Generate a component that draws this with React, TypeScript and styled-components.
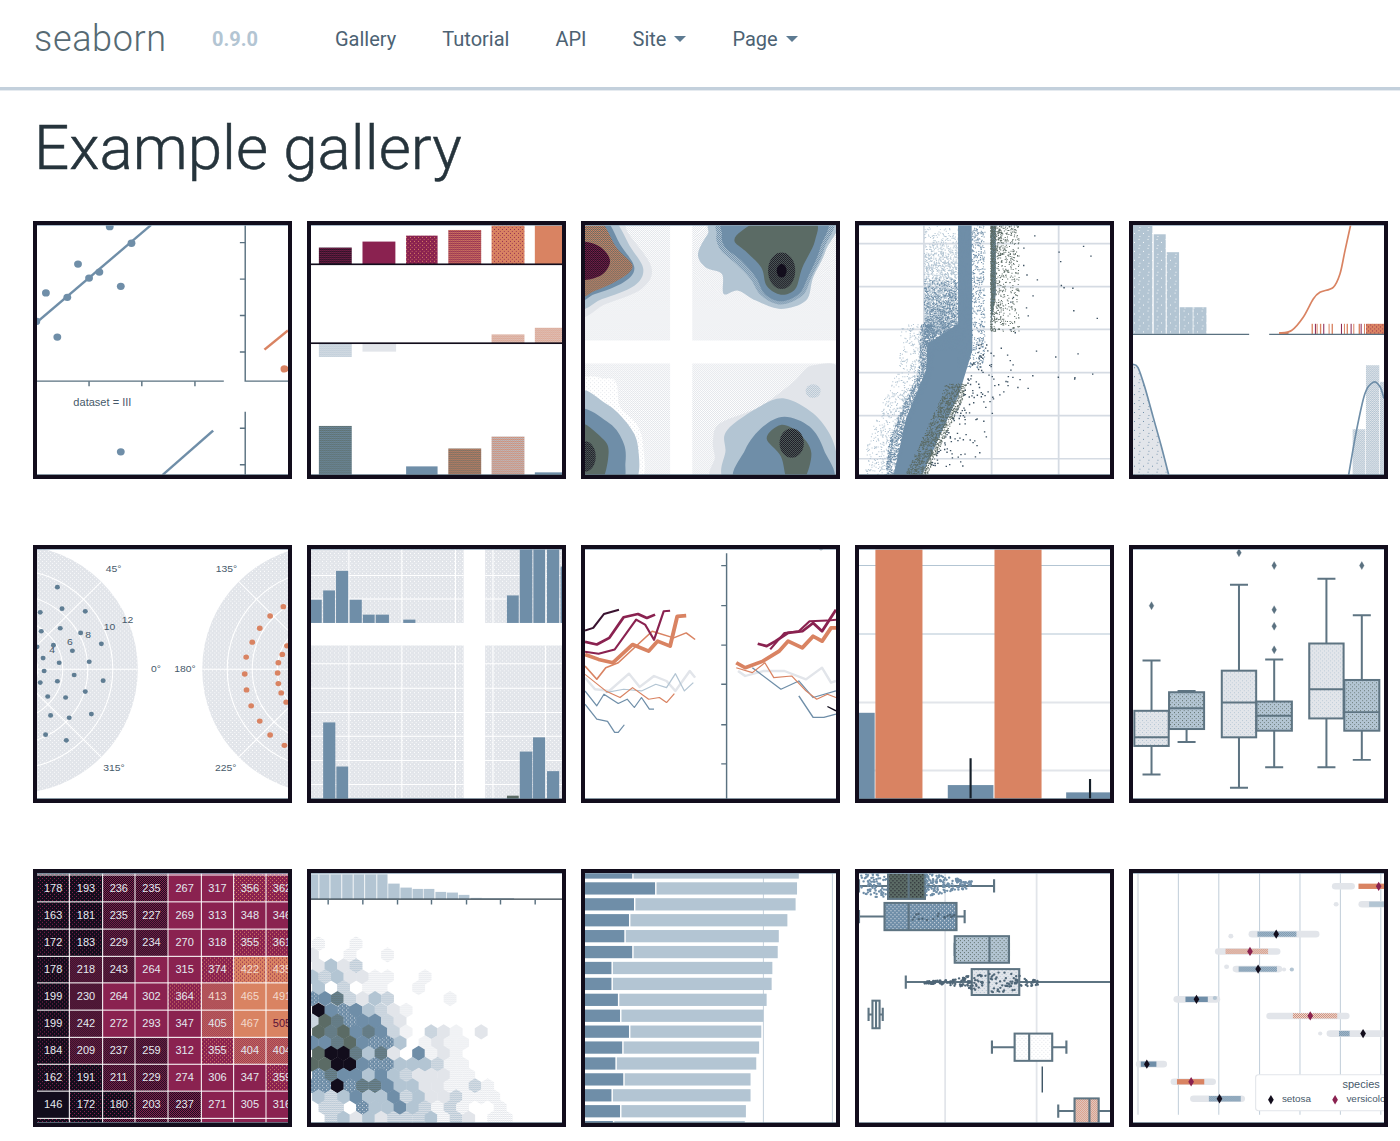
import React from "react";
import styled, { createGlobalStyle } from "styled-components";

const DARK = "#120d1c";
const MAROON = "#8a2250";
const ORANGE = "#d98362";
const STEEL = "#6f8ea8";
const LIGHT = "#b3c5d3";
const PALE = "#e2e5ea";
const GREEN = "#5b6b65";
const AXIS = "#5a7180";

const Global = createGlobalStyle`
  html, body { margin: 0; padding: 0; background: #fff; }
  body { font-family: Roboto, "Liberation Sans", sans-serif; overflow-x: hidden; }
`;

const Navbar = styled.nav`
  display: flex;
  align-items: center;
  height: 90px;
  padding: 0 34px 9px;
  box-sizing: border-box;
  border-bottom: 3px solid #c3d0dc;
  box-shadow: 0 1px 0 #e6ebf0;
`;
const Brand = styled.a`
  font-size: 36px;
  font-weight: 300;
  color: #566a73;
  letter-spacing: 0.65px;
  width: 178px;
`;
const Version = styled.span`
  font-size: 20px;
  font-weight: 700;
  color: #b3c5d3;
  width: 123px;
`;
const NavList = styled.div`
  display: flex;
  gap: 46px;
`;
const NavLink = styled.a`
  display: inline-flex;
  align-items: center;
  gap: 8px;
  font-size: 20px;
  font-weight: 400;
  color: #4c6273;
`;
const Caret = styled.span`
  width: 0;
  height: 0;
  border-left: 6px solid transparent;
  border-right: 6px solid transparent;
  border-top: 6px solid #5d7b92;
`;
const Main = styled.main`
  padding: 0 0 0 33px;
`;
const Title = styled.h1`
  margin: 0;
  padding: 22px 0 38px 1px;
  font-size: 62px;
  line-height: 71px;
  font-weight: 300;
  color: #26343c;
  -webkit-text-stroke: 0.5px #26343c;
`;
const Gallery = styled.div`
  display: grid;
  grid-template-columns: repeat(5, 259px);
  column-gap: 15px;
  row-gap: 66px;
`;
const Thumb = styled.a`
  display: block;
  width: 259px;
  height: 258px;
  box-sizing: border-box;
  border: 4px solid ${DARK};
  background: #fff;
  overflow: hidden;
`;
const ChartSvg = styled.svg`
  display: block;
  width: 251px;
  height: 250px;
`;
const HiddenDefs = styled.svg`
  position: absolute;
  width: 0;
  height: 0;
`;
const Label = styled.text<{ $size?: number; $color?: string }>`
  font-family: "Liberation Sans", Arial, sans-serif;
  font-size: ${(p) => p.$size ?? 29}px;
  fill: ${(p) => p.$color ?? "#46596a"};
`;

/* ---------- helpers ---------- */
const rng = (seed: number) => () => {
  seed |= 0;
  seed = (seed + 0x6d2b79f5) | 0;
  let t = Math.imul(seed ^ (seed >>> 15), 1 | seed);
  t = (t + Math.imul(t ^ (t >>> 7), 61 | t)) ^ t;
  return ((t ^ (t >>> 14)) >>> 0) / 4294967296;
};
type Pt = [number, number];
const smooth = (pts: Pt[], closed = true) => {
  const n = pts.length;
  const g = (i: number) => (closed ? pts[(i + n) % n] : pts[Math.max(0, Math.min(n - 1, i))]);
  let d = `M${pts[0][0]},${pts[0][1]}`;
  const end = closed ? n : n - 1;
  for (let i = 0; i < end; i++) {
    const [p0, p1, p2, p3] = [g(i - 1), g(i), g(i + 1), g(i + 2)];
    d += `C${p1[0] + (p2[0] - p0[0]) / 6},${p1[1] + (p2[1] - p0[1]) / 6} ${p2[0] - (p3[0] - p1[0]) / 6},${p2[1] - (p3[1] - p1[1]) / 6} ${p2[0]},${p2[1]}`;
  }
  return d + (closed ? "Z" : "");
};
const poly = (pts: Pt[]) => pts.map((p) => p.join(",")).join(" ");
const interp = (tbl: Pt[], v: number) => {
  for (let i = 1; i < tbl.length; i++) {
    if (v <= tbl[i][0]) {
      const [a, b] = [tbl[i - 1], tbl[i]];
      return a[1] + ((b[1] - a[1]) * (v - a[0])) / (b[0] - a[0]);
    }
  }
  return tbl[tbl.length - 1][1];
};

/* pattern ids: name for 2.8x3 charts, name + "S" for 3x3 charts */
const P = (n: string) => `url(#${n})`;
const PS = (n: string) => `url(#${n}S)`;

const Checker = ({ id, a, b, k }: { id: string; a: string; b: string; k: number }) => (
  <pattern id={id} patternUnits="userSpaceOnUse" width={k * 2} height={6} shapeRendering="crispEdges">
    <rect width={k * 2} height={6} fill={a} />
    <rect width={k} height={3} fill={b} />
    <rect x={k} y={3} width={k} height={3} fill={b} />
  </pattern>
);
const Dots = ({ id, a, b, k }: { id: string; a: string; b: string; k: number }) => (
  <pattern id={id} patternUnits="userSpaceOnUse" width={k * 4} height={12} shapeRendering="crispEdges">
    <rect width={k * 4} height={12} fill={a} />
    <rect width={k} height={3} fill={b} />
    <rect x={k * 2} y={6} width={k} height={3} fill={b} />
  </pattern>
);
const Sparse = ({ id, a, b, k }: { id: string; a: string; b: string; k: number }) => (
  <pattern id={id} patternUnits="userSpaceOnUse" width={k * 9} height={27} shapeRendering="crispEdges">
    <rect width={k * 9} height={27} fill={a} />
    <rect x={k} y={3} width={k} height={3} fill={b} />
    <rect x={k * 5} y={12} width={k} height={3} fill={b} />
    <rect x={k * 2} y={21} width={k} height={3} fill={b} />
  </pattern>
);
const CHECKS: [string, string, string][] = [
  ["pz", "#fff", PALE],
  ["dm", DARK, MAROON],
  ["mc", MAROON, ORANGE],
  ["gs", GREEN, STEEL],
  ["go", GREEN, ORANGE],
  ["lo", LIGHT, ORANGE],
  ["lp", LIGHT, PALE],
  ["ss", STEEL, LIGHT],
  ["op", ORANGE, PALE],
  ["bg", DARK, GREEN],
  ["lw", PALE, "#fff"],
  ["pl", "#fff", LIGHT],
];
const DOTS: [string, string, string][] = [
  ["pw", PALE, "#fff"],
  ["dd", DARK, MAROON],
  ["mo", MAROON, ORANGE],
  ["om", ORANGE, MAROON],
  ["gb", GREEN, DARK],
  ["lg", LIGHT, GREEN],
  ["sl", STEEL, PALE],
  ["gor", GREEN, ORANGE],
  ["ll", LIGHT, "#fff"],
  ["wp", "#fff", PALE],
  ["dw", DARK, "#fff"],
  ["pd", PALE, LIGHT],
];
const SPARSE: [string, string, string][] = [
  ["ls", LIGHT, "#fff"],
  ["ps", PALE, STEEL],
  ["ws", "#fff", LIGHT],
];
const PatternDefs = () => (
  <HiddenDefs aria-hidden="true">
    <defs>
      {[2.8, 3].map((k) => (
        <React.Fragment key={k}>
          {CHECKS.map(([id, a, b]) => (
            <Checker key={id} id={id + (k === 3 ? "S" : "")} a={a} b={b} k={k} />
          ))}
          {DOTS.map(([id, a, b]) => (
            <Dots key={id} id={id + (k === 3 ? "S" : "")} a={a} b={b} k={k} />
          ))}
          {SPARSE.map(([id, a, b]) => (
            <Sparse key={id} id={id + (k === 3 ? "S" : "")} a={a} b={b} k={k} />
          ))}
        </React.Fragment>
      ))}
    </defs>
  </HiddenDefs>
);

const Chart = ({ box, children }: { box: [number, number, number, number]; children: React.ReactNode }) => {
  const [x0, y0, x1, y1] = box;
  return (
    <Thumb>
      <ChartSvg viewBox={`${x0} ${y0} ${x1 - x0} ${y1 - y0}`} preserveAspectRatio="none">
        {children}
        <line x1={x0} x2={x1} y1={y0 + 1} y2={y0 + 1} stroke="#8fa6b8" strokeWidth={3} />
        <line x1={x0} x2={x1} y1={y1 - 1} y2={y1 - 1} stroke="#5f7483" strokeWidth={3} />
      </ChartSvg>
    </Thumb>
  );
};
type BarSpec = [number, number, number, number, string];
const Bars = ({ data }: { data: BarSpec[] }) => (
  <>
    {data.map(([a, b, t, base, f], i) => (
      <rect key={i} x={a} width={b - a} y={t} height={base - t} fill={f} />
    ))}
  </>
);
const Speckle = ({ pts, color, size = 3 }: { pts: Pt[]; color: string; size?: number }) => (
  <path d={pts.map(([x, y]) => `M${x.toFixed(1)} ${y.toFixed(1)}h${size}v${size}h-${size}z`).join("")} fill={color} />
);

/* ---------- 1: anscombe ---------- */
const Anscombe = () => {
  const dots: Pt[] = [[252, 47], [313, 97], [163, 160], [223, 184], [194, 202], [73, 247], [133, 260], [283, 227], [105, 380], [46, 333], [283, 726]];
  return (
    <Chart box={[48, 42, 752, 796]}>
      <line x1={48} y1={335} x2={368} y2={42} stroke={STEEL} strokeWidth={7} />
      <line x1={400} y1={796} x2={542} y2={662} stroke={STEEL} strokeWidth={7} />
      <line x1={686} y1={418} x2={752} y2={360} stroke={ORANGE} strokeWidth={7} />
      {dots.map(([x, y], i) => <circle key={i} cx={x} cy={y} r={11} fill={STEEL} />)}
      <circle cx={742} cy={476} r={11} fill={ORANGE} />
      <path d="M48 513H572M632 42V513H752M632 605V796" stroke={AXIS} strokeWidth={4} fill="none" />
      <path d="M194 513V528M342 513V528M491 513V528M632 95H617M632 205H617M632 315H617M632 425H617M632 655H617M632 765H617" stroke={AXIS} strokeWidth={4} fill="none" />
      <Label x={150} y={587} $size={31}>dataset = III</Label>
    </Chart>
  );
};

/* ---------- 2: grouped bars ---------- */
const FacetBars = () => (
  <Chart box={[816, 42, 1518, 796]}>
    <Bars data={[
      [838, 930, 110, 160, P("dm")], [960, 1052, 92, 160, MAROON], [1082, 1170, 74, 160, P("mo")],
      [1200, 1292, 57, 160, P("mc")], [1321, 1413, 42, 160, P("om")], [1442, 1518, 42, 160, ORANGE],
      [1321, 1413, 372, 398, P("op")], [1442, 1518, 352, 398, P("op")],
      [838, 930, 400, 440, P("lp")], [960, 1054, 400, 424, PALE],
      [838, 930, 648, 796, P("gs")], [1082, 1170, 770, 796, STEEL], [1200, 1292, 716, 796, P("go")],
      [1321, 1413, 680, 796, P("lo")], [1442, 1518, 788, 796, STEEL],
    ]} />
    <rect x={816} y={158} width={702} height={5} fill={DARK} />
    <rect x={816} y={396} width={702} height={5} fill={DARK} />
  </Chart>
);

/* ---------- 3: kde grid ---------- */
const Kde = () => {
  const layers: [string, Pt[]][] = [
    [PALE, [[20, 20], [135, 20], [165, 70], [228, 170], [200, 235], [100, 280], [20, 305]]],
    [LIGHT, [[20, 20], [115, 20], [170, 110], [205, 175], [180, 225], [90, 265], [20, 280]]],
    [STEEL, [[20, 20], [95, 20], [140, 100], [180, 170], [150, 215], [70, 250], [20, 255]]],
    [P("go"), [[20, 20], [80, 20], [130, 110], [175, 165], [140, 205], [70, 240], [20, 245]]],
    [P("dm"), [[20, 100], [80, 105], [112, 150], [85, 195], [20, 200]]],
    [P("lw"), [[345, 100], [380, 45], [440, 20], [770, 20], [745, 130], [700, 200], [680, 240], [695, 320], [670, 345], [580, 310], [500, 270], [440, 260], [400, 230], [350, 190]]],
    [LIGHT, [[358, 130], [385, 70], [420, 30], [730, 20], [715, 120], [680, 200], [660, 270], [590, 295], [520, 270], [470, 240], [430, 250], [425, 190], [380, 170]]],
    [P("ss"), [[410, 70], [440, 30], [720, 20], [712, 110], [675, 200], [650, 255], [590, 282], [535, 255], [505, 205], [465, 160], [420, 115]]],
    [STEEL, [[425, 70], [450, 30], [705, 20], [700, 110], [665, 200], [640, 250], [590, 272], [545, 250], [520, 200], [480, 150], [435, 110]]],
    [GREEN, [[460, 90], [480, 60], [540, 30], [680, 30], [685, 90], [650, 170], [630, 235], [590, 252], [550, 225], [535, 170], [490, 120]]],
    [P("wp"), [[20, 530], [100, 505], [130, 520], [140, 590], [185, 640], [205, 710], [190, 820], [20, 820]]],
    [LIGHT, [[20, 555], [100, 580], [160, 640], [190, 710], [175, 820], [20, 820]]],
    [STEEL, [[20, 605], [110, 640], [150, 700], [155, 760], [140, 820], [20, 820]]],
    [GREEN, [[20, 645], [90, 685], [108, 730], [85, 820], [20, 820]]],
    [PALE, [[400, 690], [420, 640], [530, 590], [620, 520], [680, 465], [770, 500], [770, 820], [420, 820], [405, 740]]],
    [LIGHT, [[440, 660], [530, 590], [600, 565], [680, 610], [730, 680], [750, 760], [750, 820], [450, 820], [435, 720]]],
    [STEEL, [[490, 720], [540, 650], [600, 620], [670, 650], [710, 720], [725, 820], [470, 820]]],
    [GREEN, [[550, 685], [590, 645], [640, 670], [675, 730], [650, 820], [610, 820], [590, 740]]],
  ];
  return (
    <Chart box={[42, 42, 744, 796]}>
      <path d="M42 42H280V390H42ZM342 42H744V390H342ZM42 460H280V796H42ZM342 460H744V796H342Z" fill={P("pz")} />
      {layers.map(([f, pts], i) => <path key={i} d={smooth(pts)} fill={f} />)}
      <ellipse cx={592} cy={180} rx={38} ry={55} fill={P("bg")} />
      <ellipse cx={592} cy={180} rx={14} ry={20} fill={DARK} />
      <circle cx={680} cy={543} r={21} fill={P("lp")} />
      <ellipse cx={620} cy={700} rx={34} ry={44} fill={P("bg")} />
      <ellipse cx={42} cy={740} rx={30} ry={46} fill={P("bg")} />
    </Chart>
  );
};

/* ---------- 4: scatter ---------- */
const LEFT_EDGE: Pt[] = [[340, 990], [480, 985], [610, 930], [700, 900], [796, 890]];
const RIGHT_EDGE: Pt[] = [[340, 1130], [420, 1130], [560, 1092], [680, 1040], [796, 990]];
const scatterData = (() => {
  const r = rng(11);
  const light: Pt[] = [];
  const steel: Pt[] = [];
  const green: Pt[] = [];
  const ink: Pt[] = [];
  for (let i = 0; i < 2200; i++) {
    const y = 42 + Math.pow(r(), 0.55) * 330;
    light.push([990 + r() * 92, y]);
  }
  for (let i = 0; i < 900; i++) {
    const y = 340 + r() * 456;
    light.push([interp(LEFT_EDGE, y) - Math.pow(r(), 2.2) * 70, y]);
  }
  for (let i = 0; i < 1400; i++) {
    const y = 340 + r() * 456;
    steel.push([interp(LEFT_EDGE, y) - 10 + r() * 40, y]);
  }
  for (let i = 0; i < 1300; i++) {
    const y = 42 + r() * 430;
    steel.push([1085 + Math.pow(r(), 1.5) * 75, y]);
  }
  for (let i = 0; i < 1500; i++) {
    const y = 200 + Math.pow(r(), 0.6) * 220;
    steel.push([990 + r() * 95, y]);
  }
  for (let i = 0; i < 900; i++) {
    const y = 42 + Math.pow(r(), 1.4) * 320;
    green.push([1176 + Math.pow(r(), 2) * 80, y]);
  }
  for (let i = 0; i < 1100; i++) {
    const y = 520 + r() * 276;
    green.push([interp(RIGHT_EDGE, y) - 62 * r() + 8, y]);
  }
  for (let i = 0; i < 150; i++) {
    const y = 400 + r() * 370;
    ink.push([interp(RIGHT_EDGE, y) + 5 + Math.pow(r(), 2) * 130, y]);
  }
  for (let i = 0; i < 32; i++) ink.push([1230 + r() * 260, 70 + r() * 500]);
  return { light, steel, green, ink };
})();
const Scatter = () => (
  <Chart box={[808, 42, 1512, 796]}>
    <path d="M808 98H1512M808 228H1512M808 357H1512M808 487H1512M808 617H1512M808 747H1512M990 42V796M1180 42V796M1368 42V796" stroke="#d5dbe3" strokeWidth={5} fill="none" />
    <Speckle pts={scatterData.light} color={LIGHT} />
    <polygon points={poly([[1086, 42], [1124, 42], [1126, 420], [1088, 555], [1036, 675], [985, 796], [905, 796], [940, 625], [996, 480], [1000, 400], [1086, 340]])} fill={STEEL} />
    <Speckle pts={scatterData.steel} color={STEEL} />
    <polygon points={poly([[1178, 42], [1192, 42], [1192, 250], [1178, 340]])} fill={P("gs")} />
    <Speckle pts={scatterData.green} color={GREEN} />
    <Speckle pts={scatterData.ink} color="#3d5263" size={4} />
  </Chart>
);

/* ---------- 5: pair grid ---------- */
const PairGrid = () => {
  const rug = [575, 585, 590, 600, 610, 626, 635, 663, 672, 680, 692, 700, 716, 722, 732];
  return (
    <Chart box={[40, 42, 792, 796]}>
      <Bars data={[
        [40, 98, 45, 370, PS("ls")], [102, 138, 70, 370, PS("ls")], [141, 178, 124, 370, PS("ls")],
        [180, 219, 290, 370, PS("ls")], [221, 260, 290, 370, PS("ls")],
        [698, 736, 658, 796, PS("lp")], [738, 778, 465, 796, PS("lp")], [780, 792, 515, 796, PS("lp")],
      ]} />
      {rug.map((x, i) => <rect key={x} x={x} y={340} width={i % 3 === 0 ? 4 : 3} height={32} fill={i % 3 === 1 ? MAROON : ORANGE} />)}
      <rect x={738} y={340} width={54} height={32} fill={PS("om")} />
      <rect x={478} y={365} width={28} height={6} fill={ORANGE} />
      <path d="M40 372H388M448 372H792" stroke={AXIS} strokeWidth={4} />
      <path d={smooth([[478, 368], [515, 360], [550, 320], [580, 265], [600, 245], [640, 230], [660, 190], [675, 120], [692, 42]], false)} stroke={ORANGE} strokeWidth={5} fill="none" />
      <path d={smooth([[40, 462], [55, 472], [75, 530], [100, 620], [125, 710], [147, 796]], false) + "L40 796Z"} fill={PS("ps")} />
      <path d={smooth([[40, 462], [55, 472], [75, 530], [100, 620], [125, 710], [147, 796]], false)} stroke={STEEL} strokeWidth={5} fill="none" />
      <path d={smooth([[686, 796], [710, 660], [735, 550], [760, 516], [780, 530], [792, 565]], false)} stroke={STEEL} strokeWidth={5} fill="none" />
    </Chart>
  );
};

/* ---------- 6: polar ---------- */
const Polar = () => {
  const left: Pt[] = [[105, 157], [118, 222], [57, 233], [183, 230], [60, 290], [113, 281], [170, 295], [228, 328], [94, 332], [48, 337], [147, 349], [65, 371], [110, 385], [194, 382], [68, 410], [152, 422], [57, 445], [105, 441], [233, 439], [183, 472], [78, 487], [128, 490], [86, 544], [138, 551], [200, 540], [72, 602], [130, 619]];
  const right: Pt[] = [[737, 216], [700, 244], [671, 281], [650, 323], [747, 334], [734, 360], [633, 368], [723, 385], [629, 419], [721, 416], [723, 448], [634, 467], [731, 476], [745, 504], [647, 515], [671, 561], [700, 603], [740, 634]];
  const disc = (cx: number, key: string) => (
    <g key={key} fill="none" stroke="#fff" strokeWidth={3}>
      <ellipse cx={cx} cy={405} rx={350} ry={375} fill={P("pw")} stroke="none" />
      {[70, 140, 210, 280].map((r) => <ellipse key={r} cx={cx} cy={405} rx={r} ry={r * 1.07} />)}
      <path d={`M${cx - 350} 405H${cx + 350}M${cx - 248} 140L${cx + 248} 670M${cx - 248} 670L${cx + 248} 140`} />
    </g>
  );
  const labels: [string, number, number][] = [["45°", 240, 112], ["135°", 548, 112], ["12", 285, 265], ["10", 235, 287], ["8", 183, 310], ["6", 132, 332], ["4", 82, 357], ["0°", 367, 412], ["180°", 432, 412], ["315°", 233, 713], ["225°", 546, 713]];
  return (
    <Chart box={[48, 42, 750, 796]}>
      {disc(-20, "a")}
      {disc(860, "b")}
      {left.map(([x, y], i) => <circle key={i} cx={x} cy={y} r={7} fill="#5f7d93" />)}
      {right.map(([x, y], i) => <circle key={i} cx={x} cy={y} r={8} fill={ORANGE} />)}
      {labels.map(([t, x, y]) => <Label key={t} x={x} y={y}>{t}</Label>)}
    </Chart>
  );
};

/* ---------- 7: facet hist ---------- */
const FacetHist = () => (
  <Chart box={[816, 42, 1518, 796]}>
    <path d="M816 42H1243V265H816ZM1303 42H1518V265H1303ZM816 333H1243V796H816ZM1303 333H1518V796H1303Z" fill={P("pw")} />
    <path d="M922 42V265M1070 42V265M1220 42V265M1325 42V265M1472 42V265M922 333V796M1070 333V796M1220 333V796M1325 333V796M1472 333V796M816 122H1243M1303 122H1518M816 193H1243M1303 193H1518M816 388H1243M1303 388H1518M816 462H1243M1303 462H1518M816 535H1243M1303 535H1518M816 607H1243M1303 607H1518M816 680H1243M1303 680H1518M816 752H1243M1303 752H1518" stroke="#fff" strokeWidth={3} fill="none" />
    <Bars data={[
      [816, 846, 195, 265, STEEL], [850, 883, 167, 265, STEEL], [886, 920, 108, 265, STEEL], [924, 958, 195, 265, STEEL],
      [961, 994, 240, 265, STEEL], [997, 1034, 240, 265, STEEL], [1074, 1108, 255, 265, STEEL],
      [1364, 1397, 182, 265, STEEL], [1400, 1435, 42, 265, STEEL], [1438, 1471, 42, 265, STEEL], [1476, 1510, 42, 265, STEEL], [1514, 1518, 95, 265, STEEL],
      [850, 884, 565, 796, STEEL], [887, 920, 698, 796, STEEL],
      [1364, 1397, 786, 796, GREEN], [1400, 1435, 653, 796, STEEL], [1437, 1471, 610, 796, STEEL], [1476, 1510, 712, 796, STEEL],
    ]} />
  </Chart>
);

/* ---------- 8: line plots ---------- */
const LineFacets = () => {
  const lines: [string, number, Pt[]][] = [
    [PALE, 7, [[42, 430], [70, 465], [110, 470], [165, 418], [195, 458], [235, 425], [270, 440], [295, 470], [335, 410], [350, 430]]],
    [PALE, 7, [[470, 410], [490, 425], [540, 410], [600, 410], [660, 435], [705, 400], [730, 445], [744, 440]]],
    [LIGHT, 3.5, [[100, 475], [150, 465], [200, 470], [240, 450], [270, 460], [295, 418], [320, 470], [345, 445]]],
    [STEEL, 3.5, [[510, 400], [590, 465], [640, 440], [680, 490], [744, 470]]],
    [ORANGE, 3.5, [[42, 420], [100, 470], [140, 490], [175, 460], [220, 495], [250, 490], [270, 505], [292, 478]]],
    [STEEL, 3.5, [[42, 470], [75, 515], [95, 480], [135, 508], [160, 495], [180, 520], [200, 490], [222, 525], [235, 525]]],
    [STEEL, 3.5, [[42, 510], [75, 555], [105, 562], [125, 595], [135, 595], [152, 572]]],
    [ORANGE, 3.5, [[465, 400], [510, 415], [545, 385], [570, 430], [620, 425], [660, 470], [690, 495], [720, 480], [744, 490]]],
    [STEEL, 4, [[640, 485], [680, 550], [710, 550], [744, 540]]],
    [ORANGE, 4.5, [[42, 395], [75, 435], [100, 400], [135, 385], [180, 340], [230, 290], [290, 310], [325, 295], [350, 315]]],
    [ORANGE, 11, [[42, 360], [80, 375], [120, 385], [175, 330], [220, 350], [245, 320], [280, 335], [300, 245], [325, 243]]],
    [ORANGE, 11, [[465, 385], [490, 400], [540, 380], [585, 350], [610, 320], [650, 340], [680, 305], [705, 320], [730, 280], [744, 280]]],
    [MAROON, 8, [[42, 322], [75, 330], [110, 310], [150, 248], [190, 238], [215, 250], [238, 240]]],
    [MAROON, 6, [[42, 352], [80, 358], [125, 345], [185, 255], [210, 270], [235, 316], [262, 230], [280, 228]]],
    [MAROON, 8, [[525, 328], [550, 335], [575, 320], [610, 295], [650, 290], [680, 265], [705, 290], [744, 225]]],
    [MAROON, 6, [[560, 345], [600, 295], [640, 290], [670, 260], [720, 258], [744, 255]]],
    ["#3a1330", 6, [[42, 288], [65, 280], [95, 238], [137, 225]]],
    [DARK, 4, [[720, 517], [744, 530]]],
  ];
  return (
    <Chart box={[42, 42, 744, 796]}>
      <path d="M438 55V796M438 92H423M438 213H423M438 332H423M438 450H423M438 572H423M438 690H423" stroke={AXIS} strokeWidth={4} fill="none" />
      {lines.map(([c, w, pts], i) => <polyline key={i} points={poly(pts)} stroke={c} strokeWidth={w} fill="none" strokeLinejoin="round" />)}
      <circle cx={702} cy={40} r={6} fill={AXIS} />
    </Chart>
  );
};

/* ---------- 9: big bars ---------- */
const TallBars = () => (
  <Chart box={[808, 42, 1512, 796]}>
    <path d="M808 92H1512M808 298H1512" stroke={LIGHT} strokeWidth={3} />
    <path d="M808 505H1512M808 710H1512" stroke={PALE} strokeWidth={6} />
    <Bars data={[
      [808, 852, 536, 796, STEEL], [854, 986, 42, 796, ORANGE], [1057, 1185, 754, 796, STEEL],
      [1188, 1320, 42, 796, ORANGE], [1389, 1512, 776, 796, STEEL],
    ]} />
    <path d="M1121 673V796M1456 736V796" stroke="#16202a" strokeWidth={6} />
  </Chart>
);

/* ---------- 10: box plots ---------- */
const BoxStroke = "#5e7482";
type Box = { x: number; w: number; t: number; b: number; m: number; hi: number; lo: number; f: string; o: number[] };
const BOXES: Box[] = [
  { x: 44, w: 103, t: 530, b: 636, m: 610, hi: 378, lo: 722, f: "pd", o: [213] },
  { x: 148, w: 105, t: 474, b: 585, m: 522, hi: 470, lo: 624, f: "lg", o: [] },
  { x: 306, w: 103, t: 409, b: 610, m: 505, hi: 150, lo: 762, f: "pd", o: [53] },
  { x: 410, w: 106, t: 502, b: 590, m: 545, hi: 375, lo: 700, f: "lg", o: [92, 225, 275, 346] },
  { x: 568, w: 103, t: 327, b: 553, m: 465, hi: 132, lo: 700, f: "pd", o: [] },
  { x: 673, w: 105, t: 437, b: 590, m: 534, hi: 242, lo: 678, f: "lg", o: [92] },
];
const BoxPlot = () => (
  <Chart box={[40, 42, 792, 796]}>
    {BOXES.map((b) => {
      const c = b.x + b.w / 2;
      return (
        <g key={b.x} stroke={BoxStroke} strokeWidth={6}>
          <path d={`M${c} ${b.hi}V${b.lo}M${c - 27} ${b.hi}H${c + 27}M${c - 27} ${b.lo}H${c + 27}`} fill="none" />
          <rect x={b.x} y={b.t} width={b.w} height={b.b - b.t} fill={PS(b.f)} />
          <line x1={b.x} x2={b.x + b.w} y1={b.m} y2={b.m} />
          {b.o.map((y) => <polygon key={y} points={`${c},${y - 12} ${c + 7},${y} ${c},${y + 12} ${c - 7},${y}`} fill={AXIS} strokeWidth={1} />)}
        </g>
      );
    })}
  </Chart>
);

/* ---------- 11: heatmap ---------- */
const HEAT = [
  [178, 193, 236, 235, 267, 317, 356, 362],
  [163, 181, 235, 227, 269, 313, 348, 346],
  [172, 183, 229, 234, 270, 318, 355, 361],
  [178, 218, 243, 264, 315, 374, 422, 435],
  [199, 230, 264, 302, 364, 413, 465, 491],
  [199, 242, 272, 293, 347, 405, 467, 505],
  [184, 209, 237, 259, 312, 355, 404, 404],
  [162, 191, 211, 229, 274, 306, 347, 359],
  [146, 172, 180, 203, 237, 271, 305, 316],
];
const heatFill = (v: number) => {
  if (v <= 150) return DARK;
  if (v < 200) return PS("dd");
  if (v < 262) return PS("dm");
  if (v < 352) return MAROON;
  if (v < 380) return PS("mo");
  if (v < 416) return PS("mc");
  if (v < 445) return PS("om");
  return ORANGE;
};
const HX = [51, 148, 248, 345, 444, 544, 641, 738, 836];
const HY = [39, 126, 208, 290, 370, 452, 534, 615, 696, 778, 792];
const Heatmap = () => (
  <Chart box={[51, 39, 804, 792]}>
    {HEAT.map((row, r) => row.map((v, c) => (
      <rect key={`${r}-${c}`} x={HX[c]} y={HY[r]} width={HX[c + 1] - HX[c]} height={HY[r + 1] - HY[r]} fill={heatFill(v)} />
    )))}
    {HEAT[8].map((v, c) => <rect key={c} x={HX[c]} y={778} width={HX[c + 1] - HX[c]} height={14} fill={heatFill(v + 20)} />)}
    <path d={HX.slice(1, 8).map((x) => `M${x} 39V792`).join("") + HY.slice(1, 10).map((y) => `M51 ${y}H804`).join("") + "M51 45H804"} stroke="#fff" strokeWidth={3} fill="none" />
    {HEAT.map((row, r) => row.map((v, c) => (
      <Label key={`t${r}-${c}`} x={(HX[c] + HX[c + 1]) / 2 - (c === 7 ? 1 : 0)} y={(HY[r] + HY[r + 1]) / 2 + 11 + (r === 0 ? 3 : 0)} textAnchor="middle" $size={33} $color={v === 505 ? "#5a1038" : v > 410 ? "#f3d9cc" : "#e4e9ef"}>{v}</Label>
    )))}
  </Chart>
);

/* ---------- 12: hexbin ---------- */
const HEXROWS: [number, number, string][] = [
  [252, 53, "1..1"],
  [285, 36, "2..1..1"],
  [318, 53, "2423"],
  [351, 36, "4342211..1"],
  [384, 53, "4.3.11..1"],
  [417, 36, "5673243....1"],
  [452, 53, "96564321"],
  [485, 36, "38756632"],
  [517, 53, "87867631.321.2"],
  [550, 36, "66786554.1211"],
  [582, 53, "8997472.6121"],
  [615, 36, "8899655444311"],
  [648, 53, "5766464322211"],
  [680, 36, "559577644221131"],
  [713, 53, "434644634223111"],
  [746, 36, ".33.544643131..1"],
  [778, 53, ".342423334132.11"],
];
const HEXFILL: Record<string, string> = { "1": P("pz"), "2": PALE, "3": P("lp"), "4": LIGHT, "5": P("sl"), "6": STEEL, "7": P("gs"), "8": GREEN, "9": DARK };
const hexPts = (x: number, y: number) => `${x},${y - 23} ${x + 18},${y - 11} ${x + 18},${y + 11} ${x},${y + 23} ${x - 18},${y + 11} ${x - 18},${y - 11}`;
const Hexbin = () => (
  <Chart box={[32, 38, 734, 792]}>
    <Bars data={[
      [32, 246, 42, 117, LIGHT], [248, 280, 70, 117, LIGHT], [282, 314, 82, 117, LIGHT], [316, 345, 86, 117, LIGHT],
      [347, 377, 86, 117, LIGHT], [380, 410, 95, 117, LIGHT], [412, 443, 97, 117, LIGHT], [445, 475, 104, 117, LIGHT],
      [478, 510, 113, 117, LIGHT], [510, 600, 114, 117, LIGHT],
    ]} />
    <path d="M54 42V117M85 42V117M118 42V117M150 42V117M182 42V117M216 42V117" stroke="#fff" strokeWidth={2.5} />
    <path d="M32 117H734" stroke="#2f3e48" strokeWidth={4} />
    <path d="M80 117V133M177 117V133M274 117V133M369 117V133M467 117V133M562 117V133M659 117V133" stroke={AXIS} strokeWidth={4} />
    {HEXROWS.map(([y, x0, s]) => s.split("").map((c, i) => c === "." ? null : (
      <polygon key={`${y}-${i}`} points={hexPts(x0 + i * 35, y)} fill={HEXFILL[c]} />
    )))}
  </Chart>
);

/* ---------- 13: stacked horizontal bars ---------- */
const HBARS: [number, number, number][] = [
  [18, 930, 1396], [66, 994, 1391], [114, 935, 1387], [162, 921, 1364], [210, 908, 1340], [258, 930, 1337], [306, 872, 1322], [354, 872, 1320],
  [402, 890, 1306], [450, 896, 1297], [498, 921, 1291], [546, 902, 1285], [594, 883, 1277], [642, 905, 1261], [690, 872, 1261], [738, 896, 1248], [786, 876, 1245],
];
const HorizontalBars = () => (
  <Chart box={[798, 38, 1500, 792]}>
    <path d="M1297 38V792M1490 38V792" stroke="#c8d4de" strokeWidth={3} />
    {HBARS.map(([y, d, l]) => (
      <g key={y}>
        <rect x={d + 4} y={y} width={l - d - 4} height={37} fill={LIGHT} />
        <rect x={798} y={y} width={d - 798} height={37} fill={STEEL} />
      </g>
    ))}
  </Chart>
);

/* ---------- 14: box + swarm ---------- */
const swarm = (() => {
  const r = rng(5);
  const out: { x: number; y: number; c: string }[] = [];
  for (let i = 0; i < 230; i++) {
    const x = i % 3 === 0 ? 45 + r() * 75 : 228 + Math.pow(r(), 1.4) * 130;
    const sp = x > 228 ? 36 * (1 - (x - 228) / 180) : 38;
    out.push({ x, y: 73 + (r() - 0.5) * 2 * sp, c: STEEL });
  }
  for (let i = 0; i < 200; i++) {
    const x = 225 + r() * 320;
    const sp = 30 * Math.exp(-Math.pow((x - 420) / 90, 2)) + 4;
    out.push({ x, y: 367 + (r() - 0.5) * 2 * sp, c: "#4f6677" });
  }
  for (let i = 0; i < 18; i++) out.push({ x: 190 + r() * 140, y: 170 + (r() - 0.5) * 20, c: "#4f6677" });
  return out;
})();
const SWARM_BOXES: { x: number; w: number; t: number; b: number; m: number; f: string; l: number; h: number }[] = [
  { x: 122, w: 104, t: 38, b: 116, m: 180, f: P("gb"), l: 40, h: 421 },
  { x: 112, w: 203, t: 128, b: 210, m: 180, f: P("sl"), l: 40, h: 338 },
  { x: 310, w: 153, t: 228, b: 308, m: 408, f: P("lg"), l: 310, h: 463 },
  { x: 358, w: 134, t: 327, b: 405, m: 405, f: P("pd"), l: 172, h: 760 },
  { x: 78, w: 20, t: 422, b: 505, m: 88, f: "#fff", l: 67, h: 107 },
  { x: 479, w: 106, t: 521, b: 603, m: 520, f: P("wp"), l: 415, h: 625 },
  { x: 648, w: 68, t: 716, b: 792, m: 690, f: P("op"), l: 602, h: 760 },
];
const BoxSwarm = () => (
  <Chart box={[40, 38, 748, 790]}>
    <path d="M283 38V790M541 38V790" stroke={PALE} strokeWidth={5} />
    {SWARM_BOXES.map((b) => {
      const c = (b.t + b.b) / 2;
      return (
        <g key={b.t} stroke={BoxStroke} strokeWidth={6}>
          <path d={`M${b.l} ${c}H${b.h}M${b.l} ${c - 20}V${c + 20}M${b.h} ${c - 20}V${c + 20}`} fill="none" />
          <rect x={b.x} y={b.t} width={b.w} height={b.b - b.t} fill={b.f} />
          <line x1={b.m} x2={b.m} y1={b.t} y2={b.b} />
        </g>
      );
    })}
    <line x1={557} x2={557} y1={620} y2={698} stroke="#3f5666" strokeWidth={4} />
    {swarm.map((p, i) => <circle key={i} cx={p.x} cy={p.y} r={3.5} fill={p.c} />)}
  </Chart>
);

/* ---------- 15: strip plot ---------- */
type Strip = { y: number; a: number; b: number; pa: number; pb: number; c: string; m: number; mc: string };
const STRIPS: Strip[] = [
  { y: 78, a: 1450, b: 1530, pa: 1385, pb: 1430, c: ORANGE, m: 1507, mc: MAROON },
  { y: 132, a: 1480, b: 1530, pa: 1460, pb: 1530, c: LIGHT, m: 1600, mc: DARK },
  { y: 222, a: 1165, b: 1275, pa: 1150, pb: 1330, c: P("ss"), m: 1218, mc: DARK },
  { y: 274, a: 1075, b: 1195, pa: 1055, pb: 1220, c: P("op"), m: 1144, mc: MAROON },
  { y: 327, a: 1112, b: 1220, pa: 1105, pb: 1225, c: P("ss"), m: 1167, mc: DARK },
  { y: 418, a: 962, b: 1025, pa: 938, pb: 1050, c: STEEL, m: 993, mc: DARK },
  { y: 468, a: 1265, b: 1390, pa: 1200, pb: 1415, c: P("op"), m: 1314, mc: MAROON },
  { y: 521, a: 1395, b: 1425, pa: 1370, pb: 1530, c: P("ss"), m: 1463, mc: DARK },
  { y: 613, a: 836, b: 880, pa: 832, pb: 900, c: STEEL, m: 853, mc: DARK },
  { y: 666, a: 938, b: 1015, pa: 930, pb: 1038, c: ORANGE, m: 978, mc: MAROON },
  { y: 717, a: 1028, b: 1118, pa: 985, pb: 1120, c: P("ss"), m: 1058, mc: DARK },
];
const diamond = (x: number, y: number) => `${x},${y - 14} ${x + 8},${y} ${x},${y + 14} ${x - 8},${y}`;
const Strips = () => (
  <Chart box={[814, 38, 1522, 790]}>
    <path d="M828 38V765" stroke={PALE} strokeWidth={6} />
    <path d="M942 38V765M1056 38V765M1171 38V765M1285 38V765M1399 38V765M1513 38V765" stroke="#c4d0db" strokeWidth={3} />
    {STRIPS.map((s) => (
      <g key={s.y}>
        <line x1={s.pa} x2={s.pb} y1={s.y} y2={s.y} stroke={PALE} strokeWidth={20} strokeLinecap="round" />
        <line x1={s.a} x2={s.b} y1={s.y} y2={s.y} stroke={s.c} strokeWidth={16} />
        <polygon points={diamond(s.m, s.y)} fill={s.mc} />
      </g>
    ))}
    <circle cx={1387} cy={132} r={7} fill={PALE} />
    <circle cx={1090} cy={228} r={7} fill={PALE} />
    <circle cx={1078} cy={320} r={7} fill={PALE} />
    <circle cx={1240} cy={328} r={6} fill={PALE} />
    <circle cx={1262} cy={328} r={6} fill={LIGHT} />
    <circle cx={1342} cy={521} r={6} fill={PALE} />
    <circle cx={1045} cy={414} r={6} fill={LIGHT} />
    <rect x={1160} y={645} width={400} height={108} rx={8} fill="#fff" stroke={PALE} strokeWidth={3} />
    <Label x={1405} y={684} $size={31}>species</Label>
    <polygon points={diamond(1203, 720)} fill={DARK} />
    <Label x={1234} y={727} $size={28}>setosa</Label>
    <polygon points={diamond(1384, 720)} fill={MAROON} />
    <Label x={1416} y={727} $size={28}>versicolor</Label>
  </Chart>
);

export default function App() {
  return (
    <>
      <Global />
      <PatternDefs />
      <Navbar>
        <Brand>seaborn</Brand>
        <Version>0.9.0</Version>
        <NavList>
          <NavLink>Gallery</NavLink>
          <NavLink>Tutorial</NavLink>
          <NavLink>API</NavLink>
          <NavLink>Site <Caret /></NavLink>
          <NavLink>Page <Caret /></NavLink>
        </NavList>
      </Navbar>
      <Main>
        <Title>Example gallery</Title>
        <Gallery>
          <Anscombe />
          <FacetBars />
          <Kde />
          <Scatter />
          <PairGrid />
          <Polar />
          <FacetHist />
          <LineFacets />
          <TallBars />
          <BoxPlot />
          <Heatmap />
          <Hexbin />
          <HorizontalBars />
          <BoxSwarm />
          <Strips />
        </Gallery>
      </Main>
    </>
  );
}
